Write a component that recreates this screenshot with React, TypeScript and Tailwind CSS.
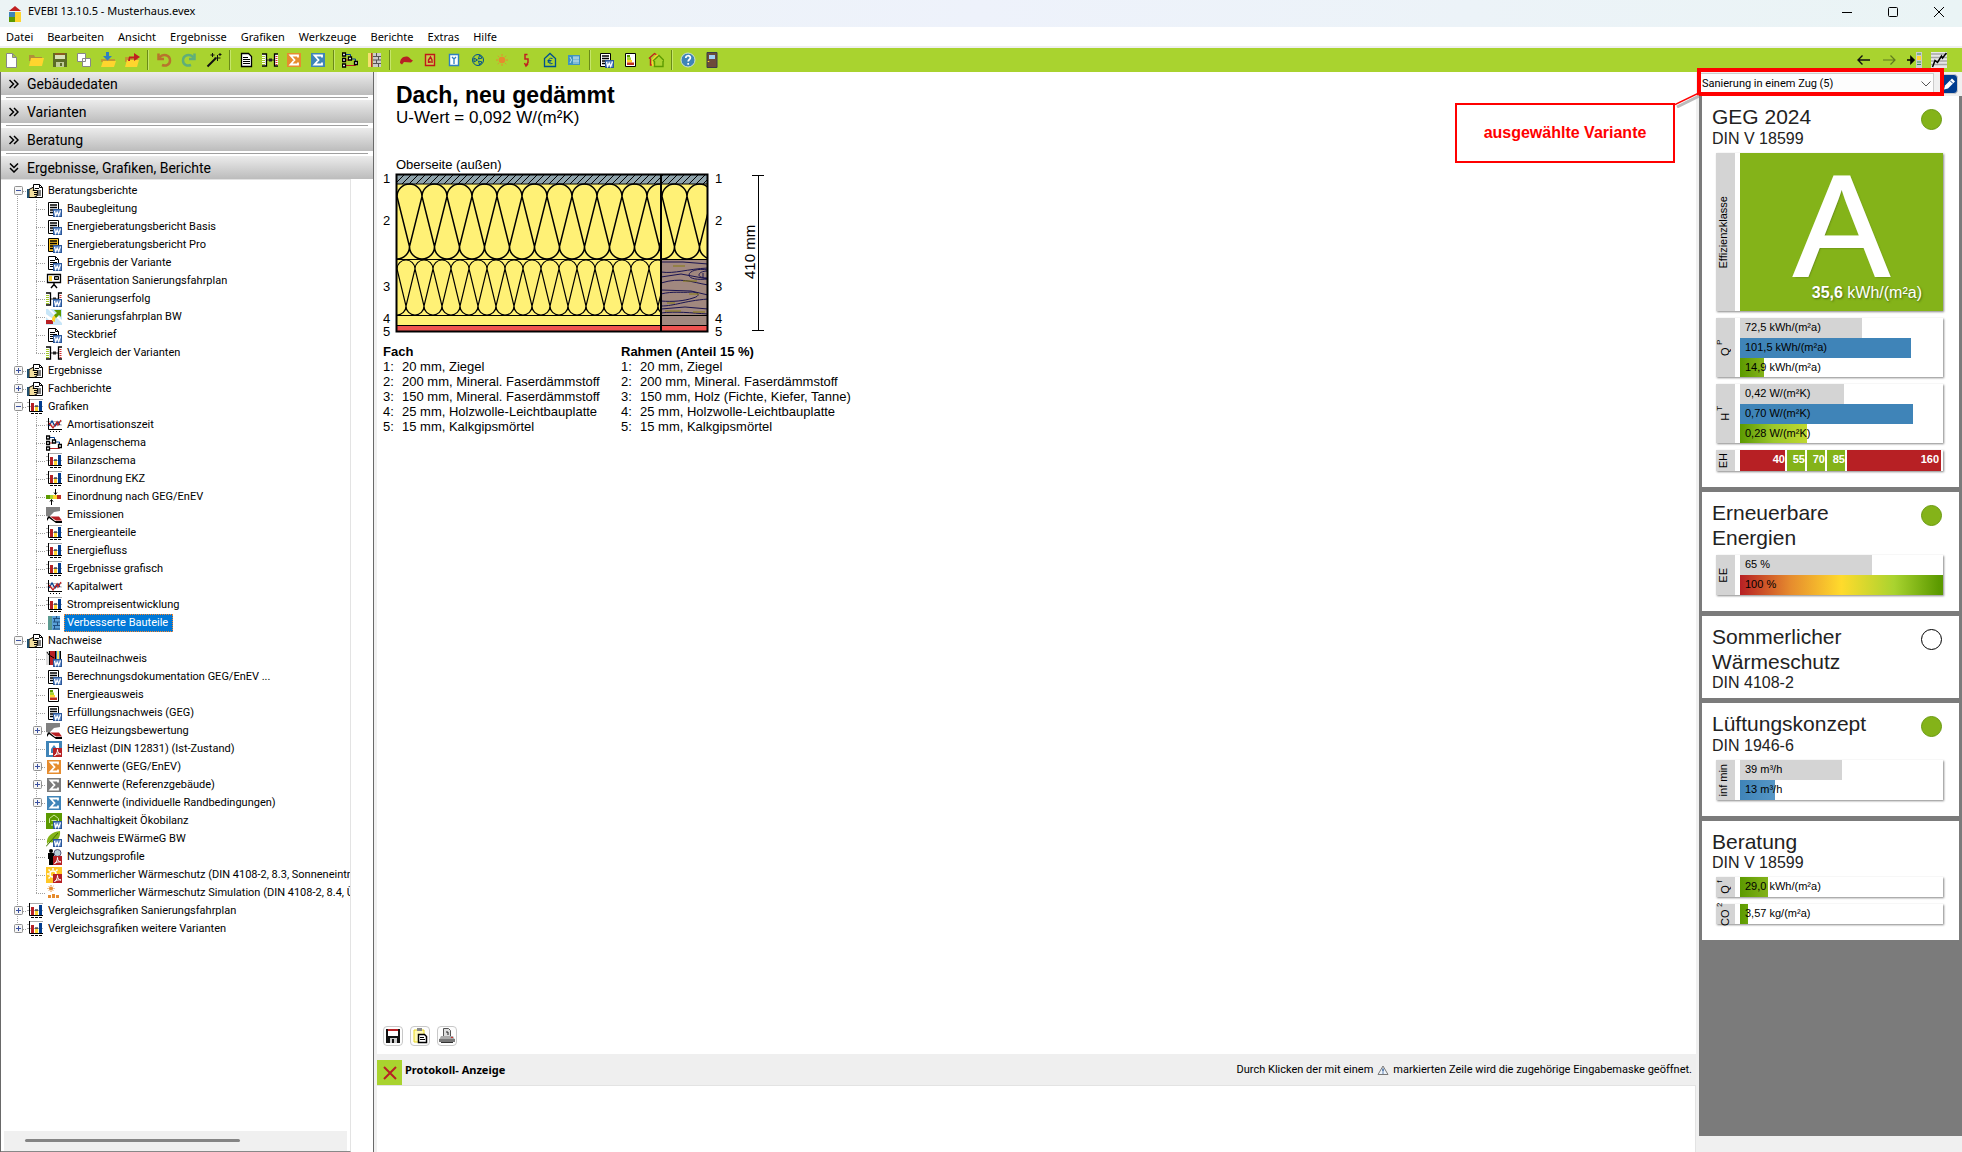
import type { ReactNode } from "react";
import { clsx } from "clsx";

type IconName =
  | "new" | "open" | "save" | "copy" | "import" | "export" | "undo" | "redo" | "wand"
  | "doc" | "compare" | "sigmaOrange" | "sigmaBlue" | "sigmaGray" | "schema" | "wall"
  | "cap" | "flame" | "window" | "fan" | "sun" | "bolt" | "euroHouse" | "panel"
  | "docWord" | "docWordPro" | "pageWord" | "certificate" | "houses" | "help" | "door"
  | "back" | "forward" | "toPanel" | "trend" | "report" | "presentation" | "compareWord"
  | "roadmap" | "chart" | "lines" | "scale" | "emission" | "wallBlue" | "component"
  | "heatLoad" | "eco" | "leaf" | "profile" | "sunPdf" | "sunSim";

const wordBadge = (
  <g>
    <path d="M7 8h9v8H7z" fill="#2b579a" />
    <path d="M8 9h7v6H8z" fill="#5b86c4" />
    <path d="M8.500 10l1.200 4.500 1.500-3.500 1.500 3.500L14.500 9.500" fill="none" stroke="#fff" strokeWidth="1.200" />
  </g>
);

const pdfBadge = (
  <g>
    <path d="M7 7h9v9H7z" fill="#b72024" />
    <path d="M8.500 14.500c2-1 3-3.500 3-6 0 3 1.500 4.500 3.500 4.500-2.500-.5-4 0-6.500 1.500z" fill="none" stroke="#fff" />
  </g>
);

const sigma = (color: string) => (
  <g>
    <path d="M1 1h14v14H1z" fill={color} />
    <path d="M12 5.500V3.500H4.500L8.500 8l-4 4.500H12v-2" fill="none" stroke="#fff" strokeWidth="1.800" />
  </g>
);

const compare = (
  <g>
    <path d="M0 2h4v12H0zM12 2h4v12h-4z" fill="#fff" />
    <path d="M0 2h4.500v12H0M16 2h-3.500v12H16" fill="none" stroke="#000" strokeWidth="1.300" />
    <path d="M1.500 4v9" stroke="#a0c828" strokeWidth="3" strokeDasharray="1 1" />
    <path d="M14.500 4v9" stroke="#d03030" strokeWidth="2" strokeDasharray="1 1" />
    <path d="M5 8h7" stroke="#222" />
    <path d="M7 6.500h3v3H7z" fill="#222" />
  </g>
);

const textDoc = (fill: string) => (
  <g>
    <path d="M2.500 1.500h10v13h-10z" fill={fill} stroke="#000" />
    <path d="M4 4h7M4 6.500h7M4 9h7M4 11.500h4" stroke="#000" strokeWidth="1.300" />
  </g>
);

const foldedPage = (
  <g>
    <path d="M2.500 1.500h7l3 3v10h-10z" fill="#fff" stroke="#000" />
    <path d="M9.500 1.500v3h3M4 5.500h5M4 7.500h7M4 9.500h7M4 11.500h7" fill="none" stroke="#000" />
  </g>
);

const icons: Record<IconName, ReactNode> = {
  new: <path d="M2.500 1.500h6l4 4v10h-10zM8.500 1.500v4h4" fill="#fff" stroke="#888" />,
  open: (
    <g>
      <path d="M1 3h5l1 2h7v4H1z" fill="#b08f3a" />
      <path d="M3 6h13l-2 8H1z" fill="#ffd52e" />
    </g>
  ),
  save: (
    <g>
      <path d="M1 1h14v14H1z" fill="#5b6b26" />
      <path d="M3 1h10v3H3z" fill="#8a5a20" />
      <path d="M3 3h10v4H3z" fill="#d7e0b8" />
      <path d="M4 10h8v5H4z" fill="#c0cc98" />
      <path d="M8 11h2v3H8z" fill="#5b6b26" />
    </g>
  ),
  copy: <path d="M1.500 1.500h8v8h-8zM6.500 6.500h8v8h-8z" fill="#fff" stroke="#888" />,
  import: (
    <g>
      <path d="M1 7h14v3H1z" fill="#c09a30" />
      <path d="M3 9h13l-2 6H1z" fill="#ffd52e" />
      <path d="M6 0h3v4h3L7.500 8.500 3 4h3z" fill="#2f7fc0" />
    </g>
  ),
  export: (
    <g>
      <path d="M1 5h6l1 2h6v3H1z" fill="#c09a30" />
      <path d="M3 8h12l-2 7H1z" fill="#ffd52e" />
      <path d="M5 4.500h5V1l6 4-6 4V6.500H6V9H4z" fill="#c02020" />
    </g>
  ),
  undo: (
    <g fill="none" stroke="#b8742c" strokeWidth="2.500">
      <path d="M3.500 5.500C7 1 14 3 14 8.500c0 4-4 6-8 4.500" />
      <path d="M2.500 1.500v5.500h5.500" />
    </g>
  ),
  redo: (
    <g fill="none" stroke="#5fae7a" strokeWidth="2.500">
      <path d="M12.500 5.500C9 1 2 3 2 8.500c0 4 4 6 8 4.500" />
      <path d="M13.500 1.500v5.500H8" />
    </g>
  ),
  wand: (
    <g stroke="#111" fill="none">
      <path d="M1.500 14.500L10 6" strokeWidth="2" />
      <path d="M11.500 3v6M8.500 6h6M6.500 1v4M4.500 3h4M14 1v3M12.500 2.500h3" />
    </g>
  ),
  doc: (
    <g>
      <path d="M3.500 1.500h7l3 3v10h-10z" fill="#fff" stroke="#000" strokeWidth="1.300" />
      <path d="M5 5.500h5M5 7.500h7M5 9.500h7M5 11.500h7" stroke="#000" />
    </g>
  ),
  compare,
  sigmaOrange: sigma("#e68c2e"),
  sigmaBlue: sigma("#3f84b8"),
  sigmaGray: sigma("#7b7b7b"),
  schema: (
    <g fill="none">
      <path d="M4 2.500h4.500v4M10 7h3.500v3" stroke="#003c8f" />
      <path d="M4 13.500h9.500v-2M4 8h3" stroke="#b72024" />
      <path d="M.5 1h3v3h-3zM.5 6.500h3v3h-3zM.5 12h3v3h-3zM6.500 5h3v3h-3zM12.500 9.500h3v3h-3z" fill="#fff" stroke="#000" strokeWidth="1.300" />
    </g>
  ),
  wall: (
    <g>
      <path d="M2 1h3v14H2z" fill="#f5e070" />
      <path d="M5 1h1.500v14H5z" fill="#c03030" />
      <path d="M7 1h8v14H7z" fill="#ccc" />
      <path d="M7 4.500h8M7 8h8M7 11.500h8M10.500 1v3.500M12.500 4.500V8M10.500 8v3.500M12.500 11.500V15" stroke="#555" />
    </g>
  ),
  cap: <path d="M2 11c0-4 3-7 7-6.500 3 .5 3 3 6 4l-2 2-7-.5-2 2.500z" fill="#b72024" />,
  flame: (
    <g fill="none" stroke="#c01818">
      <path d="M3.500 2.500h9v11h-9z" fill="#c8cf50" strokeWidth="1.400" />
      <path d="M6.500 11V8l2-3 1.500 3v3M8 11V9" strokeWidth="1.400" />
    </g>
  ),
  window: (
    <g fill="none">
      <path d="M3.500 2.500h9v11h-9z" fill="#fff" stroke="#2f7fc0" strokeWidth="1.400" />
      <path d="M6 5l2 2 2-2M8 7v5" stroke="#2f7fc0" strokeWidth="1.300" />
    </g>
  ),
  fan: (
    <g fill="none" stroke="#004f8f">
      <circle cx="8" cy="8" r="5.500" />
      <path d="M7.500 8L4 6v4zM8.500 7l1-4 2.500 3zM8.500 9l3.500 1-2.500 3z" />
    </g>
  ),
  sun: (
    <g>
      <circle cx="8" cy="8" r="3.300" fill="#e68c2e" />
      <path d="M8 2v2M8 12v2M2 8h2M12 8h2M3.800 3.800l1 1M11.200 11.200l1 1M12.200 3.800l-1 1M4.800 11.200l-1 1" stroke="#e68c2e" />
    </g>
  ),
  bolt: <path d="M9.500 2.500H7v4.500h3v3.500l-2 3M6.500 11l1.500 3 2-2" fill="none" stroke="#c02020" strokeWidth="1.500" />,
  euroHouse: (
    <g fill="none" stroke="#004f8f" strokeWidth="1.300">
      <path d="M2.500 14.500v-8L8 1.500l5.500 5v8z" />
      <path d="M10.500 6.500c-3-1-4 1-4 2.500s1 3.500 4 2.500M5.500 8.500h4M5.500 10h3.500" strokeWidth="1" />
    </g>
  ),
  panel: (
    <g>
      <path d="M2 3h12v10H2z" fill="#3f94c0" />
      <path d="M4 5l1.500 3L4 11M8 4v8M10 4v8M12 4v8M7 6h6M7 9h6" stroke="#bfe0ee" fill="none" />
    </g>
  ),
  docWord: <g>{textDoc("#fff")}{wordBadge}</g>,
  docWordPro: <g>{textDoc("#ffc726")}{wordBadge}</g>,
  pageWord: <g>{foldedPage}{wordBadge}</g>,
  certificate: (
    <g>
      <path d="M2.500 1.500h10v13h-10z" fill="#fff" stroke="#000" />
      <path d="M4 3h3v2.500H4z" fill="#5c9a00" />
      <path d="M4 5.500h4V8H4z" fill="#a9d32f" />
      <path d="M4 8h5v2.500H4z" fill="#ffd52e" />
      <path d="M4 10.500h7V13H4z" fill="#c03020" />
    </g>
  ),
  houses: (
    <g fill="none" strokeWidth="1.400">
      <path d="M4 13H2.500V7l-1-1 5-4.500L9 3" stroke="#c02020" />
      <path d="M6 13H4.500V8L9 3l2 2" stroke="#ffd52e" />
      <path d="M6.500 14.500V9.500l-1-1L11 3.500l5 5-1 1v5z" stroke="#5c9a00" />
    </g>
  ),
  help: (
    <g>
      <circle cx="8" cy="8" r="7" fill="#3f84b8" stroke="#cfe0d0" />
      <path d="M5.800 6c0-3 4.600-3 4.600-.2 0 1.700-2.200 1.700-2.200 3.700M8.200 11v1.800" fill="none" stroke="#fff" strokeWidth="1.700" />
    </g>
  ),
  door: (
    <g>
      <path d="M3 .5h10v15H3z" fill="#6d4a3a" stroke="#3b3b4a" />
      <path d="M5 3h6v4H5z" fill="#9fd0f5" />
      <path d="M4.500 9v1" stroke="#ffd52e" strokeWidth="1.500" />
    </g>
  ),
  back: <path d="M14 8H2.500M6.500 3.500L2 8l4.500 4.500" fill="none" stroke="#111" strokeWidth="1.400" />,
  forward: <path d="M2 8h11.500M9.500 3.500L14 8l-4.500 4.500" fill="none" stroke="#5f7a20" strokeWidth="1.200" />,
  toPanel: (
    <g>
      <path d="M1 8h6M5 5l3 3-3 3z" stroke="#000" strokeWidth="1.600" />
      <path d="M10 0h6v16h-6z" fill="#ccc" />
      <path d="M11 4h4v4h-4z" fill="#ffd52e" />
      <path d="M11 10h4M11 12.500h4M11 2h4" stroke="#2f8f5f" />
    </g>
  ),
  trend: (
    <g fill="none">
      <path d="M0 0h16v16H0z" fill="#e8e8e8" />
      <path d="M0 2h16M0 5.500h16M0 9h16M0 12.500h16" stroke="#a8a8a8" strokeWidth="1.500" />
      <path d="M1.500 15L4 8.500l2.500 2 4-6.500 1 2L15.500 1" stroke="#000" strokeWidth="1.500" />
    </g>
  ),
  report: (
    <g>
      <path d="M6.500 1.500h6l3 3v10h-9z" fill="#fff" stroke="#000" />
      <path d="M12.500 1.500v3h3M8 5.500h4M10 8h4M10 10h4M10 12h4" fill="none" stroke="#000" />
      <path d="M2 6.500l4-2 1 1.500-1 1.500h4.500v1.500L10 13l-3 1.500H2z" fill="#f5e0a0" stroke="#000" />
      <path d="M0 6h2v9H0z" fill="#1f4f70" />
      <path d="M7 9.500h3M7 11.500h3" stroke="#000" />
    </g>
  ),
  presentation: (
    <g fill="none" stroke="#000">
      <path d="M1.500 1.500h13v8h-13z" fill="#fff" strokeWidth="1.300" />
      <path d="M3 3h3v5H3z" fill="#ffd52e" stroke="none" />
      <path d="M8.500 3.500h4v3h-4z" fill="#999" />
      <path d="M8 10v2M8 11.500L5 15M8 11.500l3 3.500" strokeWidth="1.400" />
    </g>
  ),
  compareWord: <g>{compare}{wordBadge}</g>,
  roadmap: (
    <g>
      <path d="M0 0h16v16H0z" fill="#c8e6f8" />
      <path d="M4 0l12 11v3L2 0zM0 5l7 5-3 2-4-4z" fill="#fff" />
      <path d="M0 11h7v4H0z" fill="#b72024" />
      <path d="M6 12c0-4 1-5 4-7l2 2c-3 2-3 3-3 6z" fill="#ffd52e" />
      <path d="M8 1h7v7l-2-2-3 3-2-3 3-2z" fill="#5c9a00" />
    </g>
  ),
  chart: (
    <g>
      <path d="M2 .5h14M0 3.500h3M0 7.500h16" stroke="#aaa" />
      <path d="M2.500 0v12.500H16" fill="none" stroke="#000" />
      <path d="M4 4h3v8H4z" fill="#b72024" />
      <path d="M8 8h3v4H8z" fill="#ffd52e" />
      <path d="M12 2h3v10h-3z" fill="#003c8f" />
      <path d="M8 7h3M4 14.500h3M8 14.500h3M12 14.500h3" stroke="#000" />
    </g>
  ),
  lines: (
    <g fill="none">
      <path d="M0 4.500h16M0 8h16" stroke="#bbb" />
      <path d="M2.500 1v11.500H16M4.500 14v1M7.500 14v1M10.500 14v1M13.500 14v1" stroke="#000" />
      <path d="M3 9l3-5 3 5 3-4 2 3" stroke="#003c8f" strokeWidth="1.300" />
      <path d="M3 6l4 5 4-6 1 3 3-5" stroke="#c02020" strokeWidth="1.300" />
    </g>
  ),
  scale: (
    <g>
      <path d="M0 6h4v4H0z" fill="#5c9a00" />
      <path d="M4 6h3v4H4z" fill="#a9d32f" />
      <path d="M7 6h4v4H7z" fill="#ffd52e" />
      <path d="M11 6h4v4h-4z" fill="#c03020" />
      <path d="M9.500 0v5M8 3.500l1.500 2 1.500-2M5.500 16v-5M4 12.500l1.500-2 1.500 2" fill="none" stroke="#000" />
    </g>
  ),
  emission: (
    <g>
      <path d="M0 0h14v4l-6 1-5 5-3-1z" fill="#808080" />
      <path d="M1 14V11l2-2 6 5h7v2H10L3 11z" fill="#000" />
      <path d="M4 9.500h9l3 4h-6z" fill="#b72024" />
    </g>
  ),
  wallBlue: (
    <g>
      <path d="M2 1h4v14H2z" fill="#5a9a90" />
      <path d="M6 1h8v14H6z" fill="#5aa0d8" />
      <path d="M7 3.500h7M7 7h7M7 10.500h7M7 14h7M10.500 1v2.500M8.500 3.500V7M11.500 7v3.500M8.500 10.500V14" stroke="#1f4f80" fill="none" />
    </g>
  ),
  component: (
    <g>
      <path d="M0 0h3v14H0z" fill="#ddd" />
      <path d="M3 0h6v14H3z" fill="#b72024" />
      <path d="M9 0h5v9H9z" fill="#3f84b8" />
      <path d="M11 0h2v8h-2z" fill="#f5e070" />
      <path d="M1 1l2 3 5 3M3.500 0v14M9.500 0v8M14.500 0v8" fill="none" stroke="#000" />
      {wordBadge}
    </g>
  ),
  heatLoad: (
    <g>
      <path d="M0 0h16v16H0z" fill="#3f84b8" />
      <path d="M3 2h10v12H3z" fill="#fff" />
      <path d="M5 8l3-4 3 4v4H5z" fill="#3f84b8" />
      {pdfBadge}
    </g>
  ),
  eco: (
    <g>
      <path d="M0 0h16v16H0z" fill="#5c9a00" />
      <path d="M3.500 10V5.500L8 2l4.500 3.500V8M5 12h3M5.500 7.500h5" fill="none" stroke="#cfe8a0" />
      {wordBadge}
    </g>
  ),
  leaf: (
    <g>
      <path d="M1 13C0 5 6 1 14 0c1 7-4 13-11 11z" fill="#84b319" />
      <path d="M0 15.500L12 2" stroke="#3f7000" />
      {wordBadge}
    </g>
  ),
  profile: (
    <g>
      <circle cx="5" cy="2" r="2" fill="#000" />
      <path d="M2 4h6v6H7v6H3v-6H2z" fill="#000" />
      <circle cx="11.500" cy="4" r="3.500" fill="#b8cfd8" stroke="#557" />
      {pdfBadge}
    </g>
  ),
  sunPdf: (
    <g>
      <path d="M0 0h16v16H0z" fill="#ffc726" />
      <circle cx="7" cy="7" r="3" fill="none" stroke="#fff" strokeWidth="1.500" />
      <path d="M7 1v2M1 7h2M2.500 2.500l1.500 1.500M11.500 2.500L10 4M2.500 11.500L4 10" stroke="#fff" strokeWidth="1.500" />
      {pdfBadge}
    </g>
  ),
  sunSim: (
    <g>
      <circle cx="5" cy="3.500" r="2" fill="#e68c2e" />
      <path d="M5 0v7M1.500 3.500h7M2.500 1l5 5M7.500 1l-5 5" stroke="#e68c2e" strokeDasharray="1 1" />
      <path d="M2 10h3v3H2zM6 9h3v4H6zM10 10h3v3h-3z" fill="#e68c2e" />
    </g>
  ),
};

function Icon({ name }: { name: IconName }) {
  return (
    <svg viewBox="0 0 16 16" className="size-4 shrink-0" aria-hidden="true">
      {icons[name]}
    </svg>
  );
}

const menuItems = [
  "Datei",
  "Bearbeiten",
  "Ansicht",
  "Ergebnisse",
  "Grafiken",
  "Werkzeuge",
  "Berichte",
  "Extras",
  "Hilfe",
];

interface ToolGroup {
  tools: IconName[];
  spaced?: boolean;
}

const toolGroups: ToolGroup[] = [
  { tools: ["new", "open", "save", "copy", "import", "export"] },
  { tools: ["undo", "redo", "wand"], spaced: true },
  { tools: ["doc", "compare", "sigmaOrange", "sigmaBlue"] },
  { tools: ["schema", "wall"] },
  { tools: ["cap", "flame", "window", "fan", "sun", "bolt", "euroHouse", "panel"] },
  { tools: ["docWord", "certificate", "houses"], spaced: true },
  { tools: ["help", "door"] },
];

const viewTools: IconName[] = ["back", "forward", "toPanel", "trend"];

interface TreeNode {
  label: string;
  icon: IconName;
  expandable?: boolean;
  selected?: boolean;
  children?: TreeNode[];
}

const tree: TreeNode[] = [
  {
    label: "Beratungsberichte",
    icon: "report",
    expandable: true,
    children: [
      { label: "Baubegleitung", icon: "docWord" },
      { label: "Energieberatungsbericht Basis", icon: "docWord" },
      { label: "Energieberatungsbericht Pro", icon: "docWordPro" },
      { label: "Ergebnis der Variante", icon: "pageWord" },
      { label: "Präsentation Sanierungsfahrplan", icon: "presentation" },
      { label: "Sanierungserfolg", icon: "compareWord" },
      { label: "Sanierungsfahrplan BW", icon: "roadmap" },
      { label: "Steckbrief", icon: "pageWord" },
      { label: "Vergleich der Varianten", icon: "compare" },
    ],
  },
  { label: "Ergebnisse", icon: "report", expandable: true },
  { label: "Fachberichte", icon: "report", expandable: true },
  {
    label: "Grafiken",
    icon: "chart",
    expandable: true,
    children: [
      { label: "Amortisationszeit", icon: "lines" },
      { label: "Anlagenschema", icon: "schema" },
      { label: "Bilanzschema", icon: "chart" },
      { label: "Einordnung EKZ", icon: "chart" },
      { label: "Einordnung nach GEG/EnEV", icon: "scale" },
      { label: "Emissionen", icon: "emission" },
      { label: "Energieanteile", icon: "chart" },
      { label: "Energiefluss", icon: "chart" },
      { label: "Ergebnisse grafisch", icon: "chart" },
      { label: "Kapitalwert", icon: "lines" },
      { label: "Strompreisentwicklung", icon: "chart" },
      { label: "Verbesserte Bauteile", icon: "wallBlue", selected: true },
    ],
  },
  {
    label: "Nachweise",
    icon: "report",
    expandable: true,
    children: [
      { label: "Bauteilnachweis", icon: "component" },
      { label: "Berechnungsdokumentation GEG/EnEV ...", icon: "docWord" },
      { label: "Energieausweis", icon: "certificate" },
      { label: "Erfüllungsnachweis (GEG)", icon: "docWord" },
      { label: "GEG Heizungsbewertung", icon: "emission", expandable: true },
      { label: "Heizlast (DIN 12831) (Ist-Zustand)", icon: "heatLoad" },
      { label: "Kennwerte (GEG/EnEV)", icon: "sigmaOrange", expandable: true },
      { label: "Kennwerte (Referenzgebäude)", icon: "sigmaGray", expandable: true },
      { label: "Kennwerte (individuelle Randbedingungen)", icon: "sigmaBlue", expandable: true },
      { label: "Nachhaltigkeit Ökobilanz", icon: "eco" },
      { label: "Nachweis EWärmeG BW", icon: "leaf" },
      { label: "Nutzungsprofile", icon: "profile" },
      { label: "Sommerlicher Wärmeschutz (DIN 4108-2, 8.3, Sonneneintrag)", icon: "sunPdf" },
      { label: "Sommerlicher Wärmeschutz Simulation (DIN 4108-2, 8.4, Übertemperatur)", icon: "sunSim" },
    ],
  },
  { label: "Vergleichsgrafiken Sanierungsfahrplan", icon: "chart", expandable: true },
  { label: "Vergleichsgrafiken weitere Varianten", icon: "chart", expandable: true },
];

interface BranchProps {
  up?: boolean;
  down?: boolean;
  arm?: boolean;
  box?: "plus" | "minus";
}

// One 19px wide cell of the dotted guide lines in front of a tree row
function Branch({ up, down, arm, box }: BranchProps) {
  return (
    <svg viewBox="0 0 19 18" className="h-[18px] w-[19px] shrink-0" aria-hidden="true">
      <g stroke="#a0a0a0" strokeDasharray="1 1">
        {up && <path d="M9.500 0v9" />}
        {down && <path d="M9.500 10v8" />}
        {arm && <path d="M9 9.500h9" />}
      </g>
      {box && (
        <g>
          <rect x="6.500" y="4.500" width="8" height="8" rx="1" fill="#f6f6f6" stroke="#919191" />
          <path d={box === "plus" ? "M8 8.500h5M10.500 6v5" : "M8 8.500h5"} stroke="#3a50a0" />
        </g>
      )}
    </svg>
  );
}

function TreeRow({ node, guides }: { node: TreeNode; guides: ReactNode }) {
  return (
    <div className="flex h-[18px] items-center">
      {guides}
      <Icon name={node.icon} />
      <button
        type="button"
        className={clsx(
          "ml-0.5 flex h-[18px] shrink-0 items-center border pr-1 pl-0.5 text-left whitespace-nowrap",
          node.selected
            ? "border-dotted border-[#ff8728] bg-[#0078d7] text-white"
            : "border-transparent"
        )}
      >
        {node.label}
      </button>
    </div>
  );
}

function NavTree() {
  return (
    <ul className="pl-[7px] text-[11px] leading-4">
      {tree.map((root, r) => {
        const lastRoot = r === tree.length - 1;
        return (
          <li key={root.label}>
            <TreeRow
              node={root}
              guides={<Branch up={r > 0} down={!lastRoot} arm box={root.children ? "minus" : "plus"} />}
            />
            {root.children && (
              <ul>
                {root.children.map((child, c) => (
                  <li key={child.label}>
                    <TreeRow
                      node={child}
                      guides={
                        <>
                          <Branch up={!lastRoot} down={!lastRoot} />
                          <Branch
                            up
                            down={c < root.children!.length - 1}
                            arm
                            box={child.expandable ? "plus" : undefined}
                          />
                        </>
                      }
                    />
                  </li>
                ))}
              </ul>
            )}
          </li>
        );
      })}
    </ul>
  );
}

function SectionHeader({ label, open }: { label: string; open?: boolean }) {
  return (
    <button
      type="button"
      className="flex h-[23px] w-full shrink-0 items-center gap-2 bg-linear-to-b from-[#ececec] to-[#bcbcbc] pl-2 text-left text-sm"
    >
      <svg viewBox="0 0 10 10" className={clsx("size-2.5", open && "rotate-90")} aria-hidden="true">
        <path d="M.5 1l4 4-4 4M5 1l4 4-4 4" fill="none" stroke="#000" strokeWidth="1.500" />
      </svg>
      {label}
    </button>
  );
}

function Sidebar() {
  return (
    <nav className="flex w-[374px] shrink-0 flex-col border-x border-[#696969] bg-white font-['Roboto',sans-serif]">
      {["Gebäudedaten", "Varianten", "Beratung"].map((label) => (
        <div key={label}>
          <SectionHeader label={label} />
          <div className="mx-[5px] my-0.5 h-px bg-[#a0a0a0]" />
        </div>
      ))}
      <SectionHeader label="Ergebnisse, Grafiken, Berichte" open />
      <div className="mr-[22px] flex flex-1 flex-col overflow-hidden border-t border-r border-b border-[#e3e3e3] border-b-[#888]">
        <div className="flex-1 pt-0.5">
          <NavTree />
        </div>
        <div className="mx-[3px] h-5 bg-[#f0f0f0] pt-2 pl-[21px]">
          <div className="h-[3px] w-[215px] rounded-full bg-[#858585]" />
        </div>
      </div>
    </nav>
  );
}

// Looped quilt line used for mineral wool
function quiltPath(x: number, top: number, bottom: number, pitch: number, count: number) {
  const r = pitch / 2;
  let d = `M${x - r} ${bottom - r}A${r} ${r} 0 0 0 ${x + r} ${bottom - r}L${x} ${top + r}`;
  for (let i = 0; i < count; i++) {
    const left = x + i * pitch;
    d += `A${r} ${r} 0 0 1 ${left + pitch} ${top + r}`;
    d += `L${left + r} ${bottom - r}A${r} ${r} 0 0 0 ${left + pitch + r} ${bottom - r}L${left + pitch} ${top + r}`;
  }
  return d;
}

const layerLabels = [
  { n: 1, y: 11 },
  { n: 2, y: 53 },
  { n: 3, y: 119 },
  { n: 4, y: 151 },
  { n: 5, y: 164 },
];

function LayerDrawing() {
  return (
    <svg viewBox="0 0 400 166" className="h-[166px] w-[400px]" role="img" aria-label="Bauteilaufbau">
      <defs>
        <pattern id="hatch" width="7" height="9" patternUnits="userSpaceOnUse" y="3">
          <path d="M-2 9L7 0M5 9l9-9M-9 9l9-9" stroke="#000" />
        </pattern>
        <clipPath id="fach"><path d="M13 2h265v158H13z" /></clipPath>
        <clipPath id="rahmen"><path d="M278 2h47v158h-47z" /></clipPath>
      </defs>
      <path d="M13 2h312v10H13z" fill="#8fa3ab" />
      <path d="M13 3h312v9H13z" fill="url(#hatch)" />
      <path d="M13 12h312v75H13zM13 87h265v66H13z" fill="#fff176" />
      <path d="M278 87h47v66h-47z" fill="#a1887f" />
      <path d="M13 153h312v7H13z" fill="#ef5350" />
      <g clipPath="url(#fach)" fill="none" stroke="#000">
        <path d={quiltPath(14, 12, 87, 25, 11)} strokeWidth="1.500" />
        <path d={quiltPath(14, 88, 143, 18, 15)} strokeWidth="1.200" />
      </g>
      <g clipPath="url(#rahmen)" fill="none" stroke="#000">
        <path d={quiltPath(279, 12, 87, 25, 3)} strokeWidth="1.500" />
        <g stroke="#1a1450">
          <path d="M278 90h22l25 2M278 100c14 2 26-3 47-4M278 105l20-3 27 5M278 111c20-6 30-1 47 2M278 118l30 1 17 4" />
          <path d="M278 122c12-3 20-1 30-2 8 0 10 4 2 6-9 3-20 4-32 3M278 134c14 0 22-5 47-7M278 137l24-2 23 2M278 141c15-2 30 0 47 1" />
          <path d="M325 98c-10-2-19 1-19 5s9 5 19 4M325 99c-6 0-9 2-9 4s4 3 9 3M320 101v4" />
        </g>
        <path d="M290 94h12M300 109h14M306 122h10M284 131h8M282 139h16M310 140h12" stroke="#857a10" />
      </g>
      <path d="M13 12h312M13 87.500h312M13 143.500h312M13 153.500h312" stroke="#000" />
      <path d="M13.500 2.500h311v157h-311zM278 2v158" fill="none" stroke="#000" strokeWidth="2" />
      <g fontSize="13">
        {layerLabels.map(({ n, y }) => (
          <g key={n}>
            <text x="0" y={y}>{n}</text>
            <text x="332" y={y}>{n}</text>
          </g>
        ))}
      </g>
      <path d="M369 3.500h12M369 158.500h12M375.500 3v156" stroke="#000" />
      <text transform="translate(372 107) rotate(-90)" fontSize="15">410 mm</text>
    </svg>
  );
}

const materials = [
  {
    title: "Fach",
    layers: [
      "20 mm, Ziegel",
      "200 mm, Mineral. Faserdämmstoff",
      "150 mm, Mineral. Faserdämmstoff",
      "25 mm, Holzwolle-Leichtbauplatte",
      "15 mm, Kalkgipsmörtel",
    ],
  },
  {
    title: "Rahmen (Anteil 15 %)",
    layers: [
      "20 mm, Ziegel",
      "200 mm, Mineral. Faserdämmstoff",
      "150 mm, Holz (Fichte, Kiefer, Tanne)",
      "25 mm, Holzwolle-Leichtbauplatte",
      "15 mm, Kalkgipsmörtel",
    ],
  },
];

function OutputButton({ label, children }: { label: string; children: ReactNode }) {
  return (
    <button
      type="button"
      aria-label={label}
      className="flex size-5 items-center justify-center rounded-sm border border-[#c8c8c8] bg-[#fdfdfd]"
    >
      <svg viewBox="0 0 16 16" className="size-4" aria-hidden="true">
        {children}
      </svg>
    </button>
  );
}

function Content() {
  return (
    <main className="flex min-w-0 flex-1 flex-col border-x-[3px] border-[#f0f0f0] bg-white">
      <section className="flex flex-1 flex-col px-1.5 pt-2 pb-2 font-['Liberation_Sans',sans-serif] text-[13px]">
        <h1 className="pl-[13px] text-[23px] leading-[30px] font-bold">Dach, neu gedämmt</h1>
        <p className="pl-[13px] text-[17px] leading-4">U-Wert = 0,092 W/(m²K)</p>
        <p className="mt-8 pl-[13px] leading-[14px]">Oberseite (außen)</p>
        <LayerDrawing />
        <div className="mt-1.5 flex">
          {materials.map(({ title, layers }) => (
            <div key={title} className="w-[238px] leading-[15px] whitespace-nowrap">
              <h2 className="font-bold">{title}</h2>
              <ol>
                {layers.map((layer, i) => (
                  <li key={layer} className="flex">
                    <span className="w-[19px]">{i + 1}:</span>
                    {layer}
                  </li>
                ))}
              </ol>
            </div>
          ))}
        </div>
        <div className="mt-auto flex gap-[7px]">
          <OutputButton label="Speichern">
            <path d="M1 1h14v14H1z" fill="#111" />
            <path d="M3 1h10v2H3z" fill="#b72024" />
            <path d="M3 3h10v5H3z" fill="#fff" />
            <path d="M5 10h7v5H5z" fill="#ccc" />
            <path d="M7 11h2v4H7z" fill="#111" />
          </OutputButton>
          <OutputButton label="In Zwischenablage kopieren">
            <path d="M2 2h10v12H2z" fill="#fff9b8" stroke="#e8d820" />
            <path d="M5 0h5v3H5z" fill="#888" />
            <path d="M6.500 6.500h6l2 2v6h-8z" fill="#fff" stroke="#000" strokeWidth="1.500" />
            <path d="M8 9.500h4M8 11.500h5" stroke="#000" />
          </OutputButton>
          <OutputButton label="Drucken">
            <path d="M4.500.5h5l2 2v6h-7z" fill="#ddd" stroke="#555" />
            <path d="M7 4h2v3" fill="none" stroke="#222" />
            <path d="M2 8h12l2 4H0z" fill="#aaa" />
            <path d="M0 11h16v3H0z" fill="#777" />
            <path d="M2 14h12v1H2z" fill="#333" />
            <path d="M12 9.500h2" stroke="#d03030" />
          </OutputButton>
        </div>
      </section>
      <section>
        <div className="flex h-8 items-start justify-between border-b border-[#e3e3e3] bg-[#efefef] pt-1.5 pr-1">
          <div className="flex items-start gap-[3px]">
            <button
              type="button"
              aria-label="Protokoll schließen"
              className="flex size-[25px] items-center justify-center bg-[#a9d32f]"
            >
              <svg viewBox="0 0 14 14" className="size-3.5" aria-hidden="true">
                <path d="M1 1l12 12M13 1L1 13" stroke="#b72024" strokeWidth="2" />
              </svg>
            </button>
            <h2 className="text-[11px] leading-5 font-bold">Protokoll- Anzeige</h2>
          </div>
          <p className="flex items-center gap-1 font-['Roboto',sans-serif] text-[11px] leading-5">
            Durch Klicken der mit einem
            <svg viewBox="0 0 12 10" className="h-2.5 w-3" aria-label="Warnung" role="img">
              <path d="M6 1l5 8.500H1z" fill="#eef4fa" stroke="#777" />
              <path d="M6 3.500v3M6 7.500v1" stroke="#1f4f90" strokeWidth="1.300" />
            </svg>
            markierten Zeile wird die zugehörige Eingabemaske geöffnet.
          </p>
        </div>
        <div className="h-[66px] border-r border-[#e3e3e3]" />
      </section>
    </main>
  );
}

interface Bar {
  text: string;
  width: number;
  fill: string;
}

interface Meter {
  label: string;
  sup?: string;
  bars: Bar[];
}

const GRAY = "bg-[#d4d4d4]";
const BLUE = "bg-[#3f84b8]";

function MeterRow({ label, sup, children }: { label: string; sup?: string; children: ReactNode }) {
  return (
    <div className="flex gap-[5px] bg-white shadow-[1px_1px_2px_#888]">
      <div className="relative w-[19px] shrink-0 bg-[#d4d4d4]">
        <div className="absolute inset-0 flex items-center">
          <span className="rotate-180 text-[11px] leading-[14px] whitespace-nowrap [writing-mode:vertical-rl]">
            {label}
            {sup && <span className="ms-0.5 align-super text-[8px] leading-none">{sup}</span>}
          </span>
        </div>
      </div>
      <div className="min-w-0 flex-1">{children}</div>
    </div>
  );
}

function Bars({ bars }: { bars: Bar[] }) {
  return (
    <div>
      {bars.map((bar) => (
        <div key={bar.text} className="relative h-5 nth-3:h-[19px]">
          <div className={clsx("h-full", bar.fill)} style={{ width: `${bar.width}%` }} />
          <span className="absolute inset-0 pl-[5px] text-[11px] leading-[18px]">{bar.text}</span>
        </div>
      ))}
    </div>
  );
}

interface CardProps {
  title: string;
  norm?: string;
  status?: "ok" | "open";
  children?: ReactNode;
}

function Card({ title, norm, status, children }: CardProps) {
  return (
    <section className="bg-white px-2.5 pt-2 pb-1.5">
      <div className="flex items-start justify-between pr-[7px]">
        <h2 className="w-40 text-[21px] leading-[25px] text-[#222]">{title}</h2>
        {status && (
          <span
            className={clsx(
              "mt-[5px] size-[21px] rounded-full border",
              status === "ok" ? "border-[#6a9a10] bg-[#84b319]" : "border-black bg-white"
            )}
          />
        )}
      </div>
      {norm && <p className="text-base leading-[18px] text-[#222]">{norm}</p>}
      {children && <div className="mt-[5px] mr-1.5 mb-2.5 ml-1 flex flex-col gap-[7px]">{children}</div>}
    </section>
  );
}

const gegMeters: Meter[] = [
  {
    label: "Q",
    sup: "P",
    bars: [
      { text: "72,5 kWh/(m²a)", width: 60, fill: GRAY },
      { text: "101,5 kWh/(m²a)", width: 84, fill: BLUE },
      { text: "14,9 kWh/(m²a)", width: 12, fill: "bg-linear-to-r from-[#5c9a00] to-[#84b319]" },
    ],
  },
  {
    label: "H",
    sup: "T",
    bars: [
      { text: "0,42 W/(m²K)", width: 51, fill: GRAY },
      { text: "0,70 W/(m²K)", width: 85, fill: BLUE },
      { text: "0,28 W/(m²K)", width: 33, fill: "bg-linear-to-r from-[#5c9a00] via-[#9cc82a] to-[#c0d830]" },
    ],
  },
];

const houseClasses = [
  { value: 40, className: "w-[45px] bg-[#b72024]" },
  { value: 55, className: "w-[18px] bg-[#84b319]" },
  { value: 70, className: "w-[18px] bg-[#84b319]" },
  { value: 85, className: "w-[18px] bg-[#84b319]" },
  { value: 160, className: "flex-1 bg-[#b72024] pr-0.5" },
];

function VariantSelect() {
  return (
    <div className="relative flex h-6 shrink-0 items-center gap-1.5 bg-[#f0f0f0] pr-1 font-['Roboto',sans-serif] text-[11px]">
      <select
        aria-label="Variante"
        className="h-[22px] min-w-0 flex-1 appearance-none border border-[#ccc] bg-[#fdfdfd] pl-0.5"
      >
        <option>Sanierung in einem Zug (5)</option>
      </select>
      <svg viewBox="0 0 10 6" className="absolute right-[31px] h-1.5 w-2.5" aria-hidden="true">
        <path d="M.5.5L5 5 9.500.5" fill="none" stroke="#555" />
      </svg>
      <button
        type="button"
        aria-label="Variante bearbeiten"
        className="flex h-5 w-[18px] items-center justify-center rounded-sm border border-[#ccc] bg-[#003c8f]"
      >
        <svg viewBox="0 0 14 14" className="size-3.5" aria-hidden="true">
          <path d="M2 12.500l1-4L10 1.500l3 3L6 11.500z" fill="#fff" />
          <path d="M8 3.500l3 3" stroke="#003c8f" />
        </svg>
      </button>

      {/* Annotation: frame round the selector with its callout */}
      <div className="pointer-events-none absolute -top-1 right-[18px] -left-0.5 h-7 border-4 border-[#f00]" />
      <svg viewBox="0 0 24 16" className="absolute top-5 right-full h-4 w-6" aria-hidden="true">
        <path d="M2 15L24 4" stroke="#bbb" strokeWidth="3" />
        <path d="M0 12.500L24 1" stroke="#f00" strokeWidth="1.500" />
      </svg>
      <div className="absolute top-[31px] right-full mr-6 flex h-[60px] w-[220px] items-center justify-center border-2 border-[#f00] bg-white font-['Liberation_Sans',sans-serif] text-base font-bold text-[#f00]">
        ausgewählte Variante
      </div>
    </div>
  );
}

function ResultPanel() {
  return (
    <aside className="flex w-[263px] shrink-0 flex-col font-['Liberation_Sans',sans-serif]">
      <VariantSelect />
      <div className="flex flex-1 flex-col gap-[5px] bg-[#7b7b7b] px-[3px]">
        <Card title="GEG 2024" norm="DIN V 18599" status="ok">
          <MeterRow label="Effizienzklasse">
            <div className="flex h-[158px] flex-col items-center bg-[#84b319] text-white [text-shadow:1px_1px_2px_#4d6d10]">
              <div className="mt-2 h-[122px] text-[144px] leading-[132px] [-webkit-text-stroke:2px_white]">A</div>
              <div className="self-end pr-[21px] text-base leading-5">
                <b>35,6</b> kWh/(m²a)
              </div>
            </div>
          </MeterRow>
          {gegMeters.map((meter) => (
            <MeterRow key={meter.label} label={meter.label} sup={meter.sup}>
              <Bars bars={meter.bars} />
            </MeterRow>
          ))}
          <MeterRow label="EH">
            <div className="flex h-[21px] gap-0.5 pr-0.5 text-right text-[11px] leading-[19px] font-bold text-white">
              {houseClasses.map(({ value, className }) => (
                <div key={value} className={className}>
                  {value}
                </div>
              ))}
            </div>
          </MeterRow>
        </Card>
        <Card title="Erneuerbare Energien" status="ok">
          <MeterRow label="EE">
            <Bars
              bars={[
                { text: "65 %", width: 65, fill: GRAY },
                {
                  text: "100 %",
                  width: 100,
                  fill: "bg-[linear-gradient(to_right,#b72024,#e68c2e_25%,#ffdb2c_50%,#a9d32f_76%,#5c9a00_98%)]",
                },
              ]}
            />
          </MeterRow>
        </Card>
        <Card title="Sommerlicher Wärmeschutz" norm="DIN 4108-2" status="open" />
        <Card title="Lüftungskonzept" norm="DIN 1946-6" status="ok">
          <MeterRow label="inf min">
            <Bars
              bars={[
                { text: "39 m³/h", width: 50, fill: GRAY },
                { text: "13 m³/h", width: 17, fill: "bg-linear-to-r from-[#3f84b8] to-[#5596c6]" },
              ]}
            />
          </MeterRow>
        </Card>
        <Card title="Beratung" norm="DIN V 18599">
          <MeterRow label="Q" sup="f">
            <Bars bars={[{ text: "29,0 kWh/(m²a)", width: 14, fill: "bg-linear-to-r from-[#5c9a00] to-[#84b319]" }]} />
          </MeterRow>
          <MeterRow label="CO" sup="2">
            <Bars bars={[{ text: "3,57 kg/(m²a)", width: 4, fill: "bg-linear-to-r from-[#5c9a00] to-[#6aa408]" }]} />
          </MeterRow>
        </Card>
      </div>
      <div className="h-4 bg-[#f0f0f0]" />
    </aside>
  );
}

function TitleBar() {
  return (
    <header className="flex h-[27px] shrink-0 items-center bg-linear-to-r from-[#ecf4f5] via-[#eef2fb] to-[#eaf4f5] pl-2">
      <svg viewBox="0 0 14 16" className="h-4 w-3.5" aria-hidden="true">
        <path d="M7 0l6 5H1z" fill="#c02020" />
        <path d="M1 6h6v5H1z" fill="#3f84b8" />
        <path d="M7 6h6v10H7z" fill="#ffd52e" />
        <path d="M1 11h6v5H1z" fill="#5c9a00" />
      </svg>
      <span className="flex-1 pb-1 pl-1.5 text-[11px]">EVEBI 13.10.5 - Musterhaus.evex</span>
      <button type="button" aria-label="Minimieren" className="flex w-[46px] justify-center pb-1">
        <svg viewBox="0 0 10 10" className="size-2.5" aria-hidden="true">
          <path d="M0 5.500h10" stroke="#000" />
        </svg>
      </button>
      <button type="button" aria-label="Maximieren" className="flex w-[46px] justify-center pb-1">
        <svg viewBox="0 0 10 10" className="size-2.5" aria-hidden="true">
          <rect x=".5" y=".5" width="9" height="9" rx="1" fill="none" stroke="#000" />
        </svg>
      </button>
      <button type="button" aria-label="Schließen" className="flex w-[46px] justify-center pb-1">
        <svg viewBox="0 0 10 10" className="size-2.5" aria-hidden="true">
          <path d="M0 0l10 10M10 0L0 10" stroke="#000" />
        </svg>
      </button>
    </header>
  );
}

function ToolButton({ name }: { name: IconName }) {
  return (
    <button type="button" aria-label={name} className="flex size-6 items-center justify-center">
      <Icon name={name} />
    </button>
  );
}

function Toolbar() {
  return (
    <div className="flex h-6 shrink-0 items-center bg-[#a9d32f] pr-[11px]">
      {toolGroups.map(({ tools, spaced }, g) => (
        <div key={g} className="flex items-center">
          {g > 0 && <div className="mx-[3px] h-5 w-0.5 border-r border-[#c5e56a] bg-[#6a8a18]" />}
          <div className={clsx("flex", spaced && "gap-px")}>
            {tools.map((name) => (
              <ToolButton key={name} name={name} />
            ))}
          </div>
        </div>
      ))}
      <div className="ml-auto flex gap-px">
        {viewTools.map((name) => (
          <ToolButton key={name} name={name} />
        ))}
      </div>
    </div>
  );
}

export default function App() {
  return (
    <div className="flex min-h-screen flex-col bg-white font-['Noto_Sans',sans-serif] text-black">
      <TitleBar />
      <div className="flex h-[21px] shrink-0 items-start gap-3.5 border-b-2 border-[#efefef] pl-1.5 text-[11px] leading-5">
        {menuItems.map((item) => (
          <button key={item} type="button">
            {item}
          </button>
        ))}
      </div>
      <Toolbar />
      <div className="flex flex-1">
        <Sidebar />
        <Content />
        <ResultPanel />
      </div>
    </div>
  );
}
